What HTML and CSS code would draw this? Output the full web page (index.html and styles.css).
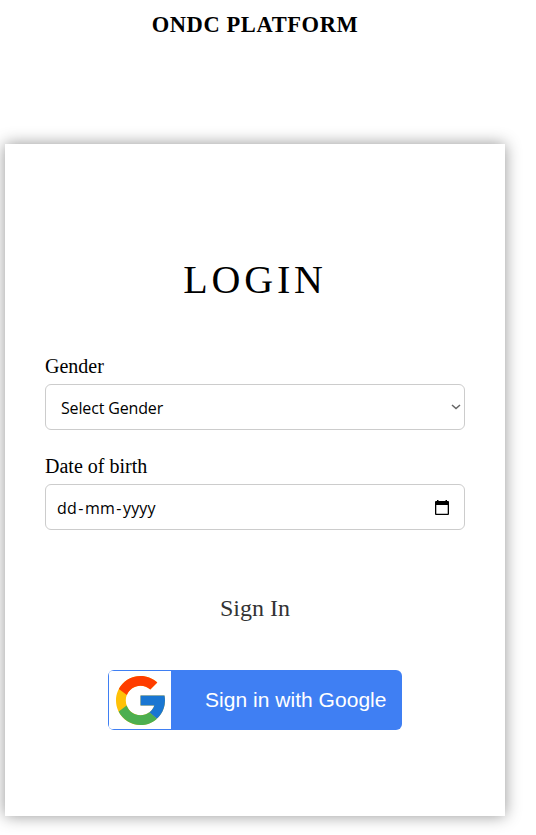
FILE: index.html
```html
<!DOCTYPE html>
<html lang="en">
<head>
<meta charset="utf-8">
<title>ONDC Platform</title>
<link rel="stylesheet" href="styles.css">
</head>
<body>
<h1 class="brand">ONDC PLATFORM</h1>
<main class="card">
  <h2 class="title">LOGIN</h2>
  <div class="field">
    <div class="label">Gender</div>
    <div class="control select">
      <span class="value">Select Gender</span>
      <svg class="chevron" width="10" height="6" viewBox="0 0 10 6"><path d="M1 1l4 3.6L9 1" fill="none" stroke="#666" stroke-width="1.5"/></svg>
    </div>
  </div>
  <div class="field">
    <div class="label">Date of birth</div>
    <div class="control date">
      <span class="value"><span>dd</span><span class="dash">-</span><span>mm</span><span class="dash">-</span><span>yyyy</span></span>
      <svg class="calendar" width="14" height="15" viewBox="0 0 14 15"><path fill-rule="evenodd" d="M2 0h1.500v1h7V0H12v1h1q1 0 1 1v12q0 1-1 1H1q-1 0-1-1V2q0-1 1-1h1zM1.300 5v8.700h11.400V5z"/></svg>
    </div>
  </div>
  <div class="signin">Sign In</div>
  <button class="google" type="button">
    <span class="logo">
      <svg width="49" height="49" viewBox="4 4 40 40">
        <path fill="#FFC107" d="M43.600 20H24v8h11.300C33.700 32.700 29.200 36 24 36c-6.600 0-12-5.400-12-12s5.400-12 12-12c3.100 0 5.800 1.200 8 3l5.700-5.700C34 6.100 29.300 4 24 4 13 4 4 13 4 24s9 20 20 20 20-9 20-20c0-1.300-.1-2.700-.4-4z"/>
        <path fill="#FF3D00" d="M6.300 14.700l6.600 4.800C14.700 15.100 19 12 24 12c3.100 0 5.800 1.200 8 3l5.700-5.700C34 6.100 29.300 4 24 4 16.300 4 9.700 8.300 6.300 14.700z"/>
        <path fill="#4CAF50" d="M24 44c5.200 0 9.900-2 13.400-5.200l-6.200-5.200C29.200 35.100 26.700 36 24 36c-5.200 0-9.600-3.300-11.300-8l-6.500 5C9.500 39.600 16.200 44 24 44z"/>
        <path fill="#1976D2" d="M43.600 20H24v8h11.300c-.8 2.200-2.200 4.200-4.100 5.600l6.200 5.200C37 39.200 44 34 44 24c0-1.300-.1-2.700-.4-4z"/>
      </svg>
    </span>
    <span class="google-text">Sign in with Google</span>
  </button>
</main>
</body>
</html>
```
FILE: styles.css
```css
* { box-sizing: border-box; }
body {
  margin: 0;
  height: 835px;
  overflow: hidden;
  background: #fff;
  color: #000;
  font-family: "Liberation Serif", "Times New Roman", serif;
}
.brand {
  width: 510px;
  margin: 0;
  padding-top: 12px;
  height: 144px;
  font-size: 22.500px;
  line-height: 25px;
  letter-spacing: .6px;
  text-align: center;
}
.card {
  width: 500px;
  height: 672px;
  margin-left: 5px;
  padding: 112px 40px 0;
  background: #fff;
  box-shadow: 0 0 15px rgba(0, 0, 0, .42);
}
.title {
  margin: 0 0 50px;
  font-size: 40px;
  font-weight: 400;
  line-height: 48px;
  letter-spacing: 3.8px;
  text-align: center;
}
.field + .field { margin-top: 24px; }
.label {
  height: 30px;
  font-size: 20px;
  line-height: 24px;
}
.control {
  display: flex;
  align-items: center;
  justify-content: space-between;
  height: 46px;
  border: 1px solid #ccc;
  border-radius: 6px;
  font-family: "Open Sans", "Noto Sans", sans-serif;
  font-size: 16px;
}
.value { padding-top: 2px; }
.select { padding: 0 3px 0 15px; }
.select .value { letter-spacing: -.15px; }
.date { padding: 0 15px 0 11px; }
.date .value { letter-spacing: .1px; }
.dash { margin: 0 1.500px; }
.signin {
  margin-top: 64px;
  color: #333;
  font-size: 24px;
  line-height: 28px;
  text-align: center;
}
.google {
  display: flex;
  align-items: center;
  width: 294px;
  height: 60px;
  margin: 48px 0 0 63px;
  padding: 1px;
  border: 0;
  border-radius: 6px;
  background: #3f7ff3;
  color: #fff;
  font-family: "Liberation Sans", Arial, sans-serif;
  font-size: 21px;
}
.logo {
  display: flex;
  align-items: center;
  justify-content: center;
  width: 62px;
  height: 58px;
  border-radius: 3px 0 0 3px;
  background: #fff;
}
.google-text {
  margin-left: 34px;
  letter-spacing: .03px;
  white-space: nowrap;
}
```
